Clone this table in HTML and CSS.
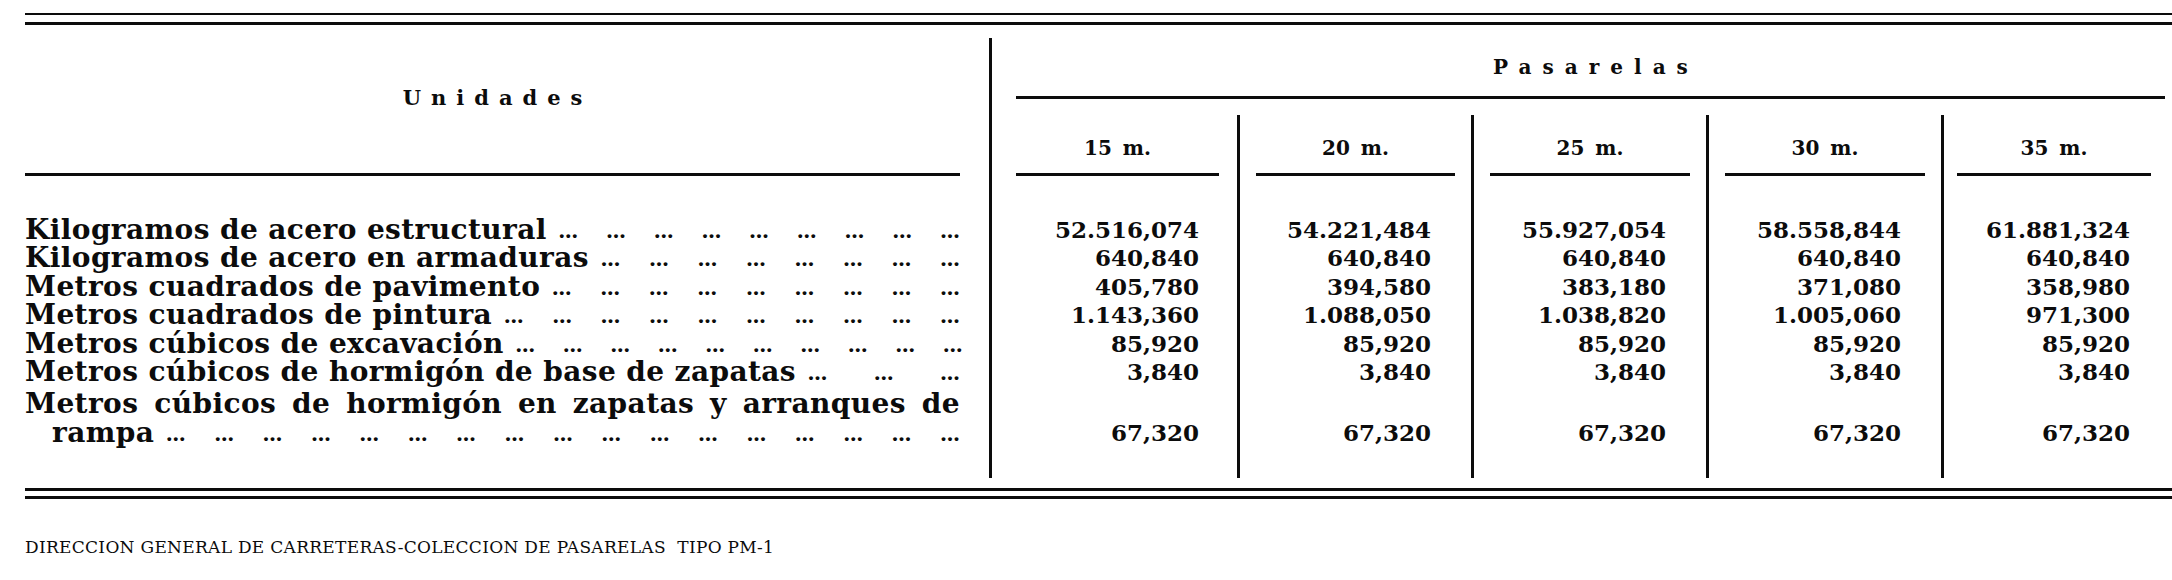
FILE: index.html
```html
<!DOCTYPE html>
<html lang="es">
<head>
<meta charset="utf-8">
<title>Pasarelas PM-1</title>
<link rel="stylesheet" href="styles.css">
</head>
<body>
<div class="page">
  <div class="double-rule top"></div>
  <div class="table">
    <div class="left">
      <div class="lhead"><span class="spaced">Unidades</span></div>
      <div class="labels">
        <div class="label"><span class="txt">Kilogramos de acero estructural</span><span class="lead"><b>...</b><b>...</b><b>...</b><b>...</b><b>...</b><b>...</b><b>...</b><b>...</b><b>...</b></span></div>
        <div class="label"><span class="txt">Kilogramos de acero en armaduras</span><span class="lead"><b>...</b><b>...</b><b>...</b><b>...</b><b>...</b><b>...</b><b>...</b><b>...</b></span></div>
        <div class="label"><span class="txt">Metros cuadrados de pavimento</span><span class="lead"><b>...</b><b>...</b><b>...</b><b>...</b><b>...</b><b>...</b><b>...</b><b>...</b><b>...</b></span></div>
        <div class="label"><span class="txt">Metros cuadrados de pintura</span><span class="lead"><b>...</b><b>...</b><b>...</b><b>...</b><b>...</b><b>...</b><b>...</b><b>...</b><b>...</b><b>...</b></span></div>
        <div class="label"><span class="txt">Metros cúbicos de excavación</span><span class="lead"><b>...</b><b>...</b><b>...</b><b>...</b><b>...</b><b>...</b><b>...</b><b>...</b><b>...</b><b>...</b></span></div>
        <div class="label"><span class="txt">Metros cúbicos de hormigón de base de zapatas</span><span class="lead"><b>...</b><b>...</b><b>...</b></span></div>
        <div class="label-wrap">
          <div class="label-first">Metros cúbicos de hormigón en zapatas y arranques de</div>
          <div class="label indent"><span class="txt">rampa</span><span class="lead"><b>...</b><b>...</b><b>...</b><b>...</b><b>...</b><b>...</b><b>...</b><b>...</b><b>...</b><b>...</b><b>...</b><b>...</b><b>...</b><b>...</b><b>...</b><b>...</b><b>...</b></span></div>
        </div>
      </div>
    </div>
    <div class="right">
      <div class="phead"><span class="spaced">Pasarelas</span></div>
      <div class="cols">
        <div class="col c1">
          <div class="chead"><span>15 m.</span></div>
          <div class="vals">
            <div>52.516,074</div><div>640,840</div><div>405,780</div><div>1.143,360</div><div>85,920</div><div>3,840</div><div class="after-gap">67,320</div>
          </div>
        </div>
        <div class="col c2">
          <div class="chead"><span>20 m.</span></div>
          <div class="vals">
            <div>54.221,484</div><div>640,840</div><div>394,580</div><div>1.088,050</div><div>85,920</div><div>3,840</div><div class="after-gap">67,320</div>
          </div>
        </div>
        <div class="col c3">
          <div class="chead"><span>25 m.</span></div>
          <div class="vals">
            <div>55.927,054</div><div>640,840</div><div>383,180</div><div>1.038,820</div><div>85,920</div><div>3,840</div><div class="after-gap">67,320</div>
          </div>
        </div>
        <div class="col c4">
          <div class="chead"><span>30 m.</span></div>
          <div class="vals">
            <div>58.558,844</div><div>640,840</div><div>371,080</div><div>1.005,060</div><div>85,920</div><div>3,840</div><div class="after-gap">67,320</div>
          </div>
        </div>
        <div class="col c5">
          <div class="chead"><span>35 m.</span></div>
          <div class="vals">
            <div>61.881,324</div><div>640,840</div><div>358,980</div><div>971,300</div><div>85,920</div><div>3,840</div><div class="after-gap">67,320</div>
          </div>
        </div>
      </div>
    </div>
  </div>
  <div class="double-rule bottom"></div>
  <div class="footer">DIRECCION GENERAL DE CARRETERAS-COLECCION DE PASARELAS&nbsp; TIPO PM-1</div>
</div>
</body>
</html>
```

FILE: styles.css
```css
html, body {
  margin: 0;
  padding: 0;
  background: #ffffff;
  color: #0c0c0c;
}

.page {
  padding-left: 25px;
  width: 2147px;
  font-family: "DejaVu Serif", "Liberation Serif", serif;
}

.double-rule {
  box-sizing: border-box;
  border-top: 2px solid #0c0c0c;
  border-bottom: 3px solid #0c0c0c;
}

.double-rule.top {
  margin-top: 13px;
  height: 12px;
}

.double-rule.bottom {
  margin-top: 10px;
  height: 11px;
  border-top-width: 3px;
}

.table {
  display: flex;
  margin-top: 13px;
  height: 440px;
  width: 2140px;
}

.left {
  width: 935px;
  margin-right: 29px;
}

.lhead {
  box-sizing: border-box;
  height: 138px;
  border-bottom: 3px solid #0c0c0c;
  display: flex;
  align-items: center;
  justify-content: center;
  padding-bottom: 16px;
}

.spaced {
  font-weight: bold;
  font-size: 21px;
  letter-spacing: 10px;
  margin-right: -10px;
}

.labels {
  padding-top: 40px;
  font-weight: bold;
  font-size: 28px;
  line-height: 28.4px;
  letter-spacing: 0.4px;
}

.label {
  display: flex;
  white-space: nowrap;
}

.label .txt {
  flex: none;
}

.lead {
  flex: 1;
  min-width: 0;
  display: flex;
  justify-content: space-between;
  margin-left: -16px;
  font-family: "Liberation Serif", serif;
  font-size: 24px;
  letter-spacing: 0.5px;
}

.lead b {
  flex: none;
  margin-left: 28px;
}

.label-wrap {
  margin-top: 4px;
}

.label-first {
  text-align: justify;
  text-align-last: justify;
  white-space: nowrap;
}

.label.indent {
  padding-left: 27px;
}

.right {
  flex: 1;
  border-left: 3px solid #0c0c0c;
}

.phead {
  box-sizing: border-box;
  margin-left: 24px;
  height: 61px;
  border-bottom: 3px solid #0c0c0c;
  display: flex;
  align-items: center;
  justify-content: center;
}

.phead .spaced {
  font-size: 20px;
  letter-spacing: 11px;
  margin-right: -11px;
}

.cols {
  display: flex;
  margin-top: 16px;
  height: 363px;
}

.col {
  box-sizing: border-box;
  border-left: 3px solid #0c0c0c;
}

.col.c1 { width: 245px; border-left: none; }
.col.c2 { width: 234px; }
.col.c3 { width: 235px; }
.col.c4 { width: 235px; }
.col.c5 { width: 224px; }

.chead {
  box-sizing: border-box;
  height: 61px;
  margin: 0 16px;
  border-bottom: 3px solid #0c0c0c;
  display: flex;
  align-items: center;
  justify-content: center;
  padding-top: 8px;
  font-weight: bold;
  font-size: 20px;
  word-spacing: 4px;
}

.col.c1 .chead { margin-left: 24px; margin-right: 18px; }
.col.c5 .chead { margin-left: 13px; margin-right: 14px; }

.vals {
  padding-top: 40px;
  padding-right: 40px;
  text-align: right;
  font-weight: bold;
  font-size: 23px;
  line-height: 28.4px;
}

.col.c1 .vals { padding-right: 38px; }
.col.c5 .vals { padding-right: 35px; }

.vals .after-gap {
  margin-top: 32.4px;
}

.footer {
  margin-top: 36px;
  font-family: "DejaVu Serif", serif;
  font-size: 17px;
  line-height: 24px;
  letter-spacing: 0.3px;
}
```
